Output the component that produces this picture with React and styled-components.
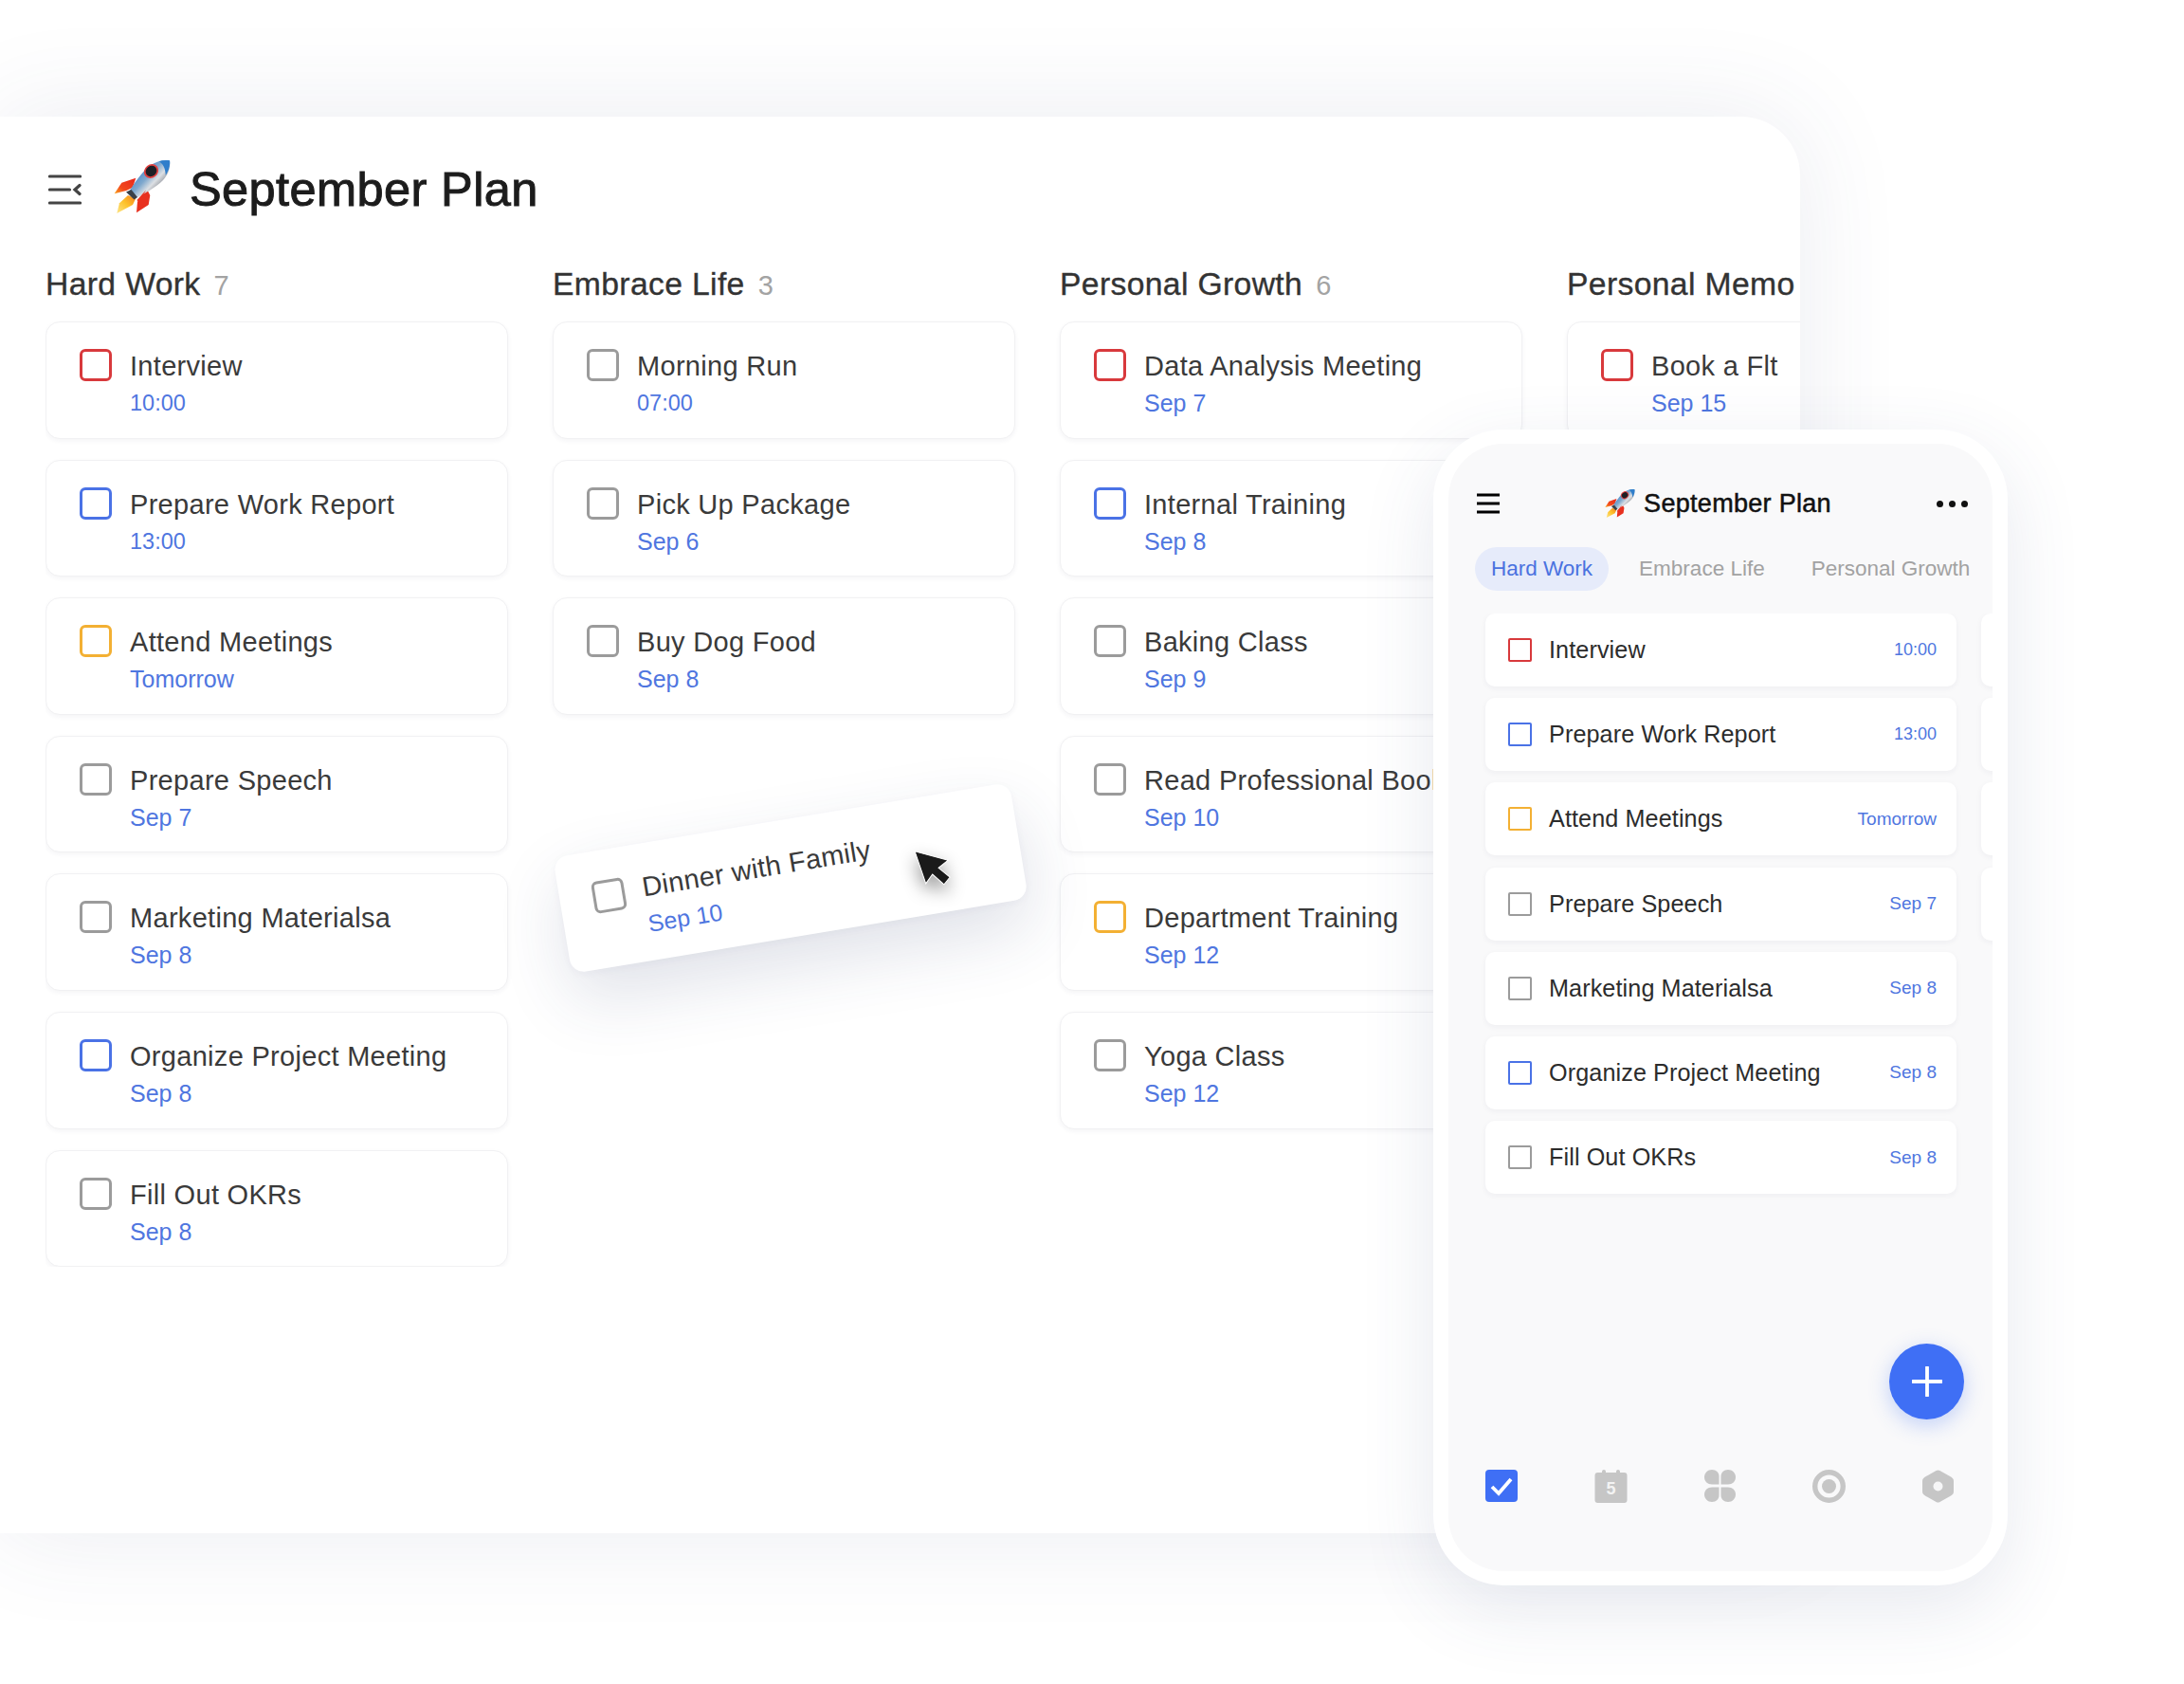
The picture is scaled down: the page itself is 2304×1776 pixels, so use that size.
import React, { useId } from 'react';
import styled, { createGlobalStyle } from 'styled-components';

const Global = createGlobalStyle`
  html, body { margin: 0; padding: 0; background: #fff; }
  body { font-family: "Liberation Sans", Arial, sans-serif; }
`;

const TONE = { red: '#d8393c', blue: '#4a72e6', amber: '#f3b033', gray: '#9b9b9b' };

const Stage = styled.div`
  position: relative; width: 2304px; height: 1776px; overflow: hidden; background: #fff;
`;
const Board = styled.section`
  position: relative; width: 1899px; height: 1494px; margin-top: 123px; box-sizing: border-box;
  background: #fff; border-top-right-radius: 62px;
  box-shadow: 0 0 110px rgba(60, 70, 120, 0.1);
  padding: 37px 0 0 48px;
`;
const BoardClip = styled.div`
  overflow: hidden; display: flex; flex-direction: column;
`;
const BoardHeader = styled.header`
  display: flex; align-items: center; height: 80px; padding-left: 3px; margin-bottom: 39px;
`;
const BoardTitle = styled.h1`
  margin: 0 0 0 20px; font-size: 50.5px; font-weight: 400; color: #1c1c1c; line-height: 1;
  -webkit-text-stroke: 1px #1c1c1c; white-space: nowrap; letter-spacing: 0.4px;
`;
const Columns = styled.div`
  display: flex; gap: 47px;
`;
const Column = styled.div`
  flex: 0 0 488px; display: flex; flex-direction: column; gap: 22px;
`;
const ColumnHead = styled.div`
  display: flex; align-items: baseline; gap: 14px; height: 40px; margin-bottom: -2px; white-space: nowrap;
  font-size: 33.7px; color: #333; line-height: 40px; -webkit-text-stroke: 0.35px #333; letter-spacing: 0.35px;
`;
const Count = styled.span`
  font-size: 29px; color: #a3a3a3; -webkit-text-stroke: 0;
`;
const Check = styled.span`
  flex: 0 0 34px; box-sizing: border-box; width: 34px; height: 34px; border-radius: 6px; background: #fff;
  margin-top: 1px; border: 3.2px solid ${p => TONE[p.$tone]};
`;
const Card = styled.article`
  box-sizing: border-box; height: 123.6px; border-radius: 15px; background: #fff;
  border: 1.5px solid #f1f1f3; box-shadow: 0 2px 5px rgba(40, 45, 80, 0.05);
  display: flex; padding: 27px 20px 0 35px; gap: 19px;
`;
const CardText = styled.div`
  display: flex; flex-direction: column; min-width: 0; white-space: nowrap;
`;
const CardTitle = styled.div`
  font-size: 29px; line-height: 38px; color: #3a3a3a; letter-spacing: 0.3px;
`;
const CardDate = styled.div`
  font-size: ${p => (p.$time ? '23.5px' : '25px')}; line-height: 28px; margin-top: 6px; color: #4f76e0;
`;
const DragCard = styled(Card)`
  position: absolute; left: 590px; top: 741px; width: 488px; border: none;
  transform: rotate(-9.4deg);
  box-shadow: 0 30px 70px rgba(50, 60, 110, 0.15), 0 2px 8px rgba(50, 60, 110, 0.04);
  ${Check} { margin-top: 5px; }
`;
const Cursor = styled.svg`
  position: absolute; left: 962px; top: 770px; width: 44px; height: 44px;
  filter: drop-shadow(0 8px 9px rgba(0, 0, 0, 0.4));
`;

const Phone = styled.aside`
  position: absolute; left: 1512px; top: 453px; width: 606px; height: 1219px; box-sizing: border-box;
  padding: 15px 16px; background: #fff; border-radius: 74px;
  box-shadow: 0 24px 80px rgba(60, 70, 120, 0.12);
`;
const Screen = styled.div`
  position: relative; height: 100%; background: #f9f9fa; border-radius: 58px; overflow: hidden;
  display: flex; flex-direction: column;
`;
const PhoneHead = styled.div`
  display: flex; align-items: center; justify-content: space-between; height: 62px;
  margin: 32px 26px 0 30px;
`;
const PhoneTitle = styled.div`
  display: flex; align-items: center; gap: 9px; font-size: 27px; color: #111; white-space: nowrap;
  -webkit-text-stroke: 0.5px #111; letter-spacing: 0.3px;
`;
const Dots = styled.div`
  display: flex; gap: 6px;
  span { width: 7px; height: 7px; border-radius: 50%; background: #111; }
`;
const Tabs = styled.nav`
  display: flex; align-items: center; height: 46px; margin: 15px 0 0 28px;
`;
const Tab = styled.span`
  display: flex; align-items: center; height: 46px; border-radius: 23px; white-space: nowrap; font-size: 22.5px;
  padding: 0 ${p => (p.$active ? '17px' : '0')};
  margin-right: ${p => (p.$active ? '32px' : '49px')};
  background: ${p => (p.$active ? '#e6ebfa' : 'transparent')};
  color: ${p => (p.$active ? '#4a72e0' : '#a2a2a2')};
`;
const Pager = styled.div`
  display: flex; gap: 26px; margin-top: 24px; padding: 0 0 10px 39px; overflow: hidden;
`;
const PhoneList = styled.div`
  flex: 0 0 497px; display: flex; flex-direction: column; gap: 12.2px;
`;
const PhoneRow = styled.div`
  box-sizing: border-box; height: 77px; border-radius: 10px; background: #fff;
  box-shadow: 0 2px 6px rgba(40, 45, 80, 0.05);
  display: flex; align-items: center; padding: 0 21px 0 24px; white-space: nowrap;
`;
const SquareCheck = styled.span`
  flex: 0 0 25px; height: 25px; box-sizing: border-box; border-radius: 2px; margin-right: 18px;
  border: 2.8px solid ${p => TONE[p.$tone]};
`;
const RowTitle = styled.span`
  flex: 1; font-size: 25.2px; color: #2c2c2c; letter-spacing: 0.1px;
`;
const RowDate = styled.span`
  font-size: ${p => (p.$time ? '18px' : '19px')}; color: #4f76e0;
`;
const Fab = styled.div`
  position: absolute; left: 465px; top: 949px; width: 79px; height: 80px; border-radius: 50%;
  background: #3f6ff5; display: flex; align-items: center; justify-content: center;
  box-shadow: 0 6px 22px rgba(63, 111, 245, 0.3);
`;
const BottomNav = styled.div`
  margin: auto 41px 73px 39px; display: flex; justify-content: space-between; align-items: center; height: 34px;
`;
const RocketArt = styled.svg`
  flex: none; margin-top: ${p => p.$lift}px;
`;

const BOARD = [
  { name: 'Hard Work', count: 7, items: [
    ['Interview', '10:00', 'red'], ['Prepare Work Report', '13:00', 'blue'], ['Attend Meetings', 'Tomorrow', 'amber'],
    ['Prepare Speech', 'Sep 7', 'gray'], ['Marketing Materialsa', 'Sep 8', 'gray'], ['Organize Project Meeting', 'Sep 8', 'blue'], ['Fill Out OKRs', 'Sep 8', 'gray'],
  ] },
  { name: 'Embrace Life', count: 3, items: [
    ['Morning Run', '07:00', 'gray'], ['Pick Up Package', 'Sep 6', 'gray'], ['Buy Dog Food', 'Sep 8', 'gray'],
  ] },
  { name: 'Personal Growth', count: 6, items: [
    ['Data Analysis Meeting', 'Sep 7', 'red'], ['Internal Training', 'Sep 8', 'blue'], ['Baking Class', 'Sep 9', 'gray'],
    ['Read Professional Book', 'Sep 10', 'gray'], ['Department Training', 'Sep 12', 'amber'], ['Yoga Class', 'Sep 12', 'gray'],
  ] },
  { name: 'Personal Memo', items: [['Book a Flt', 'Sep 15', 'red']] },
];

const isTime = d => d.includes(':');

function Rocket({ width, height, lift = 0 }) {
  const id = useId();
  return (
    <RocketArt width={width} height={height} viewBox="0 0 60 56" $lift={lift}>
      <defs>
        <linearGradient id={id + 'b'} x1="0.1" y1="0.3" x2="0.8" y2="0.9">
          <stop offset="0" stopColor="#3a7fca" />
          <stop offset="0.4" stopColor="#7fa8cd" />
          <stop offset="0.62" stopColor="#dde0e4" />
          <stop offset="0.85" stopColor="#8b8f96" />
          <stop offset="1" stopColor="#6f7278" />
        </linearGradient>
        <linearGradient id={id + 'f'} x1="1" y1="0" x2="0" y2="1">
          <stop offset="0" stopColor="#e8261c" />
          <stop offset="0.65" stopColor="#f2491c" />
          <stop offset="1" stopColor="#fba81f" />
        </linearGradient>
        <linearGradient id={id + 'y'} x1="1" y1="0" x2="0" y2="1">
          <stop offset="0" stopColor="#f5801e" />
          <stop offset="0.5" stopColor="#fdc32c" />
          <stop offset="1" stopColor="#fde58a" />
        </linearGradient>
      </defs>
      <path d="M23.3 18.7 8.3 23.7 .7 35.3 13.3 32 20 28.700Z" fill={`url(#${id}f)`} />
      <path d="M35 30.3 38.3 37 36.7 47 24 55.3 25 43.7Z" fill="#e8301f" />
      <path d="M15 37 23.3 40.3 20 47 3.3 56 6 45.3Z" fill={`url(#${id}y)`} />
      <path d="M59 .3C52-.5 45 1 38 6 30 12 20 26 15 35.3L23.3 40.3C32 35 44 29 52 21 57 15.5 60.500 8 59 .3Z" fill={`url(#${id}b)`} />
      <path d="M59 .3C55-.2 51 0 47.500 1.200 51.500 3 54.500 8 54.800 16 57.500 11.500 60 6 59 .3Z" fill="#2f7ecb" />
      <path d="M13 33.5 18.5 31 25 39 21.5 41.5Z" fill="#3a4048" />
      <path d="M24.5 42 34 31.5 31 37 25.500 43.500Z" fill="#e8301f" />
      <ellipse cx="39.5" cy="11.5" rx="8" ry="7" transform="rotate(-38 39.5 11.5)" fill="#e04040" />
      <ellipse cx="39.5" cy="11.5" rx="6.2" ry="5.4" transform="rotate(-38 39.5 11.5)" fill="#1d1f25" />
    </RocketArt>
  );
}

const MenuIcon = () => (
  <svg width="35" height="32" viewBox="0 0 35 32" style={{ flex: 'none', marginRight: 34 }}>
    <g fill="none" stroke="#444" strokeWidth="3.2" strokeLinecap="round">
      <path d="M1.5 2h32M1.5 16h21M1.5 30h32" />
      <path d="M33 11.5 28 16l5 4.5" />
    </g>
  </svg>
);
const PhoneMenu = () => (
  <svg width="24" height="22" viewBox="0 0 24 22" style={{ flex: 'none' }}>
    <path d="M0 2h24M0 11h24M0 20h24" stroke="#000" strokeWidth="3" />
  </svg>
);
const Plus = () => (
  <svg width="32" height="32" viewBox="0 0 32 32">
    <path d="M16 1v30M1 16h30" stroke="#fff" strokeWidth="3.8" strokeLinecap="round" />
  </svg>
);
const GRAY = '#c6c6c6';
const NavCheck = () => (
  <svg width="34" height="34" viewBox="0 0 34 34">
    <rect width="34" height="34" rx="4" fill="#3f6ff5" />
    <path d="M7 18l7 7L27 10" fill="none" stroke="#fff" strokeWidth="3.8" />
  </svg>
);
const NavCalendar = () => (
  <svg width="35" height="35" viewBox="0 0 35 35">
    <rect x="0.5" y="3" width="34" height="32" rx="3" fill={GRAY} />
    <rect x="8" y="0" width="4" height="7" rx="2" fill={GRAY} />
    <rect x="23" y="0" width="4" height="7" rx="2" fill={GRAY} />
    <text x="17.5" y="26" textAnchor="middle" fontFamily="Liberation Sans" fontSize="18" fontWeight="700" fill="#f3f3f3">5</text>
  </svg>
);
const NavClover = () => (
  <svg width="33" height="34" viewBox="0 0 33 34">
    <g fill={GRAY}>
      <path d="M15.500 15.500V7C15.500 3 12.500 0 8 0 3.500 0 0 3.500 0 8c0 4.500 3.500 7.500 8 7.500Z" />
      <path d="M17.500 15.500V7C17.500 3 20.500 0 25 0c4.500 0 8 3.500 8 8 0 4.500-3.500 7.500-8 7.500Z" />
      <path d="M15.500 18.500V27c0 4-3 7-7.500 7C3.500 34 0 30.500 0 26c0-4.500 3.500-7.500 8-7.500Z" />
      <path d="M17.500 18.500V27c0 4 3 7 7.500 7 4.500 0 8-3.500 8-8 0-4.500-3.500-7.500-8-7.500Z" />
    </g>
  </svg>
);
const NavTarget = () => (
  <svg width="35" height="35" viewBox="0 0 35 35">
    <circle cx="17.500" cy="17.500" r="14.800" fill="none" stroke={GRAY} strokeWidth="5.400" />
    <circle cx="17.500" cy="17.500" r="7.500" fill={GRAY} />
  </svg>
);
const NavHex = () => (
  <svg width="33" height="35" viewBox="0 0 33 35">
    <path d="M14.500 1 3 7.500C1 8.700 0 10 0 12v11c0 2 1 3.300 3 4.500L14.500 34c1.300.7 2.700.7 4 0L30 27.500c2-1.200 3-2.500 3-4.500V12c0-2-1-3.300-3-4.500L18.500 1c-1.300-.7-2.700-.7-4 0Z" fill={GRAY} />
    <circle cx="16.500" cy="17.500" r="5" fill="#f6f6f7" />
  </svg>
);

export default function App() {
  return (
    <Stage>
      <Global />
      <Board>
        <BoardClip>
          <BoardHeader>
            <MenuIcon />
            <Rocket width={60} height={56} lift={-7} />
            <BoardTitle>September Plan</BoardTitle>
          </BoardHeader>
          <Columns>
            {BOARD.map(col => (
              <Column key={col.name}>
                <ColumnHead>{col.name}{col.count ? <Count>{col.count}</Count> : null}</ColumnHead>
                {col.items.map(([title, date, tone]) => (
                  <Card key={title}>
                    <Check $tone={tone} />
                    <CardText>
                      <CardTitle>{title}</CardTitle>
                      <CardDate $time={isTime(date)}>{date}</CardDate>
                    </CardText>
                  </Card>
                ))}
              </Column>
            ))}
          </Columns>
        </BoardClip>
        <DragCard>
          <Check $tone="gray" />
          <CardText>
            <CardTitle>Dinner with Family</CardTitle>
            <CardDate>Sep 10</CardDate>
          </CardText>
        </DragCard>
        <Cursor viewBox="0 0 44 44">
          <path d="M5 3 13 38 21 29 32 41 39 34 28 23 39 16Z" fill="#1a1a1a" stroke="#fff" strokeWidth="1" transform="rotate(-6 22 22)" />
        </Cursor>
      </Board>
      <Phone>
        <Screen>
          <PhoneHead>
            <PhoneMenu />
            <PhoneTitle>
              <Rocket width={32} height={30} />
              September Plan
            </PhoneTitle>
            <Dots><span /><span /><span /></Dots>
          </PhoneHead>
          <Tabs>
            <Tab $active>Hard Work</Tab>
            <Tab>Embrace Life</Tab>
            <Tab>Personal Growth</Tab>
          </Tabs>
          <Pager>
            <PhoneList>
              {BOARD[0].items.map(([title, date, tone]) => (
                <PhoneRow key={title}>
                  <SquareCheck $tone={tone} />
                  <RowTitle>{title}</RowTitle>
                  <RowDate $time={isTime(date)}>{date}</RowDate>
                </PhoneRow>
              ))}
            </PhoneList>
            <PhoneList>
              {[0, 1, 2, 3].map(i => <PhoneRow key={i} />)}
            </PhoneList>
          </Pager>
          <Fab><Plus /></Fab>
          <BottomNav>
            <NavCheck />
            <NavCalendar />
            <NavClover />
            <NavTarget />
            <NavHex />
          </BottomNav>
        </Screen>
      </Phone>
    </Stage>
  );
}
